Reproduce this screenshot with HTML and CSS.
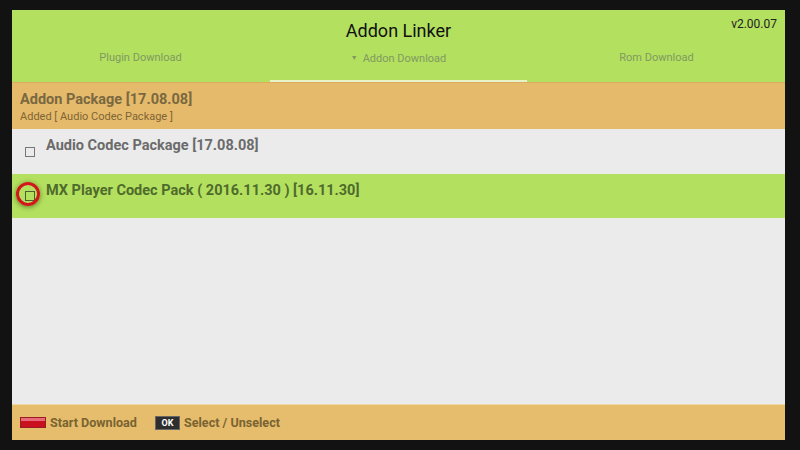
FILE: index.html
```html
<!DOCTYPE html>
<html lang="en">
<head>
    <meta charset="UTF-8">
    <title>Addon Linker</title>
    <link rel="stylesheet" href="styles.css">
</head>
<body>
    <div class="screen">
        <div class="header">
            <div class="title">Addon Linker</div>
            <div class="version">v2.00.07</div>
            <div class="tabs">
                <div class="tab">Plugin Download</div>
                <div class="tab active"><span class="arrow">&#9660;</span>Addon Download</div>
                <div class="tab">Rom Download</div>
            </div>
        </div>

        <div class="package">
            <div class="package-name">Addon Package [17.08.08]</div>
            <div class="package-info">Added [ Audio Codec Package ]</div>
        </div>

        <div class="list">
            <div class="item">
                <span class="check"></span>
                <span class="item-name">Audio Codec Package [17.08.08]</span>
            </div>
            <div class="item focused">
                <span class="check"><span class="ring"></span></span>
                <span class="item-name">MX Player Codec Pack ( 2016.11.30 ) [16.11.30]</span>
            </div>
        </div>

        <div class="footer">
            <span class="key-red"></span>
            <span class="hint">Start Download</span>
            <span class="key-ok">OK</span>
            <span class="hint">Select / Unselect</span>
        </div>
    </div>
</body>
</html>
```

FILE: styles.css
```css
body {
    margin: 0;
    background-color: #121212;
    font-family: Roboto, 'Liberation Sans', sans-serif;
}
.screen {
    width: 773px;
    height: 430px;
    margin: 10px 0 0 12px;
    display: flex;
    flex-direction: column;
    background-color: #ebebeb;
}
.header {
    position: relative;
    height: 72px;
    background-color: #b3e05f;
}
.title {
    padding-top: 10px;
    height: 22px;
    line-height: 22px;
    text-align: center;
    font-size: 18px;
    color: #111;
}
.version {
    position: absolute;
    top: 7px;
    right: 8px;
    font-size: 12px;
    color: #222;
}
.tabs {
    display: flex;
    height: 40px;
}
.tab {
    flex: 1;
    padding-top: 9px;
    line-height: 14px;
    text-align: center;
    font-size: 11px;
    color: #7f9a61;
    box-sizing: border-box;
}
.tab.active {
    margin: 0 1px 0 1px;
    border-bottom: 2px solid #e8f3c8;
}
.arrow {
    font-size: 7px;
    margin-right: 5px;
    vertical-align: 2px;
}
.package {
    height: 47px;
    box-sizing: border-box;
    padding: 8px 0 0 8px;
    background-color: #e5bb6b;
    border-top: 1px solid #dcab5e;
}
.package-name {
    font-size: 14.5px;
    font-weight: bold;
    line-height: 18px;
    color: #7a6840;
}
.package-info {
    font-size: 11px;
    line-height: 16px;
    color: #7f6435;
}
.list {
    flex: 1;
}
.item {
    position: relative;
    display: flex;
    height: 45px;
    box-sizing: border-box;
    padding: 8px 0 0 13px;
}
.item.focused {
    height: 44px;
    background-color: #b3e05f;
    padding-top: 8px;
}
.check {
    position: relative;
    width: 10px;
    height: 10px;
    margin-top: 10px;
    border: 1.5px solid #777;
    box-sizing: border-box;
    flex-shrink: 0;
}
.focused .check {
    border-color: #4f6030;
    margin-top: 9px;
}
.ring {
    position: absolute;
    left: -10.5px;
    top: -10.5px;
    width: 24px;
    height: 24px;
    border: 3.5px solid #d2161b;
    border-radius: 50%;
    box-sizing: border-box;
    box-shadow: 0 1px 5px rgba(40, 60, 10, 0.6);
}
.item-name {
    margin-left: 11px;
    font-size: 14.5px;
    font-weight: bold;
    line-height: 18px;
    color: #6b6b6b;
}
.focused .item-name {
    color: #4f6b2c;
}
.footer {
    height: 36px;
    display: flex;
    align-items: center;
    padding-left: 8px;
    background-color: #e5bd6d;
    border-top: 1px solid #f0d9a8;
    box-sizing: border-box;
}
.key-red {
    width: 26px;
    height: 11px;
    background: linear-gradient(#e86a78 0, #e86a78 30%, #c8101e 30%);
    border: 1px solid #9a1c20;
    box-sizing: border-box;
}
.hint {
    margin-left: 4px;
    font-size: 12.6px;
    font-weight: bold;
    color: #7a6330;
}
.hint:nth-of-type(2) {
    margin-right: 18px;
}
.key-ok {
    width: 23px;
    height: 12px;
    background-color: #2e2e2e;
    border: 1px solid #666;
    color: #fff;
    font-size: 9px;
    font-weight: bold;
    line-height: 12px;
    text-align: center;
}
```
